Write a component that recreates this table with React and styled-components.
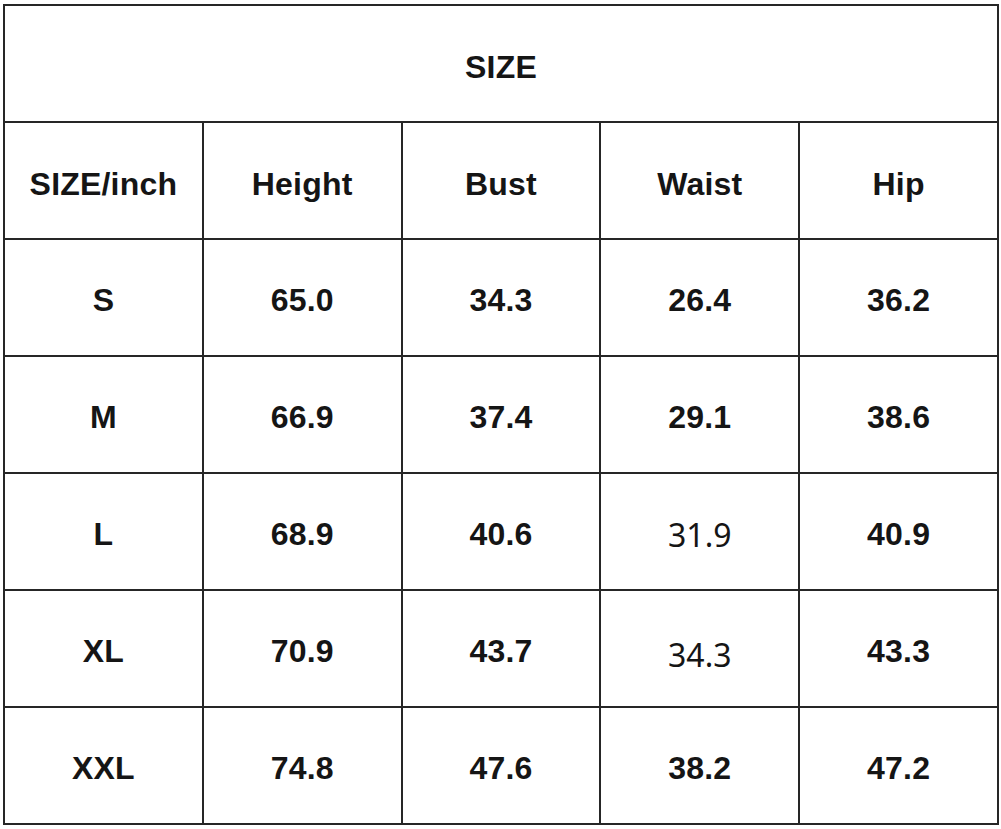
import React from "react";
import styled, { createGlobalStyle } from "styled-components";

const GlobalStyle = createGlobalStyle`
  html, body {
    margin: 0;
    padding: 0;
    background: #fff;
  }
`;

const Page = styled.div`
  padding: 4px 0 0 3px;
`;

const Table = styled.table`
  width: 996px;
  border-collapse: collapse;
  table-layout: fixed;
  font-family: "Liberation Sans", Arial, sans-serif;
  color: #151515;
`;

const Row = styled.tr`
  height: 117px;
`;

const Cell = styled.td`
  border: 2px solid #262626;
  text-align: center;
  vertical-align: middle;
  padding: ${(p) => (p.$shift ? `${p.$shift}px 0 0` : "6px 0 0")};
  font-size: 32px;
  font-weight: bold;
  letter-spacing: 0.2px;

  ${(p) =>
    p.$plain &&
    `
    font-family: "Noto Sans", "Open Sans", sans-serif;
    font-weight: normal;
    font-size: 32px;
    letter-spacing: 0;
  `}
`;

const headers = ["SIZE/inch", "Height", "Bust", "Waist", "Hip"];

const sizes = [
  { size: "S", height: "65.0", bust: "34.3", waist: "26.4", hip: "36.2" },
  { size: "M", height: "66.9", bust: "37.4", waist: "29.1", hip: "38.6" },
  { size: "L", height: "68.9", bust: "40.6", waist: "31.9", hip: "40.9", plainWaist: true, waistShift: 0 },
  { size: "XL", height: "70.9", bust: "43.7", waist: "34.3", hip: "43.3", plainWaist: true, waistShift: 12 },
  { size: "XXL", height: "74.8", bust: "47.6", waist: "38.2", hip: "47.2" },
];

const App = () => {
  return (
    <Page>
      <GlobalStyle />
      <Table>
        <tbody>
          <Row>
            <Cell colSpan={5} $shift={8}>SIZE</Cell>
          </Row>
          <Row>
            {headers.map((h) => (
              <Cell key={h} $shift={8}>{h}</Cell>
            ))}
          </Row>
          {sizes.map((s) => (
            <Row key={s.size}>
              <Cell>{s.size}</Cell>
              <Cell>{s.height}</Cell>
              <Cell>{s.bust}</Cell>
              <Cell $plain={s.plainWaist} $shift={s.waistShift}>
                {s.waist}
              </Cell>
              <Cell>{s.hip}</Cell>
            </Row>
          ))}
        </tbody>
      </Table>
    </Page>
  );
};

export default App;
